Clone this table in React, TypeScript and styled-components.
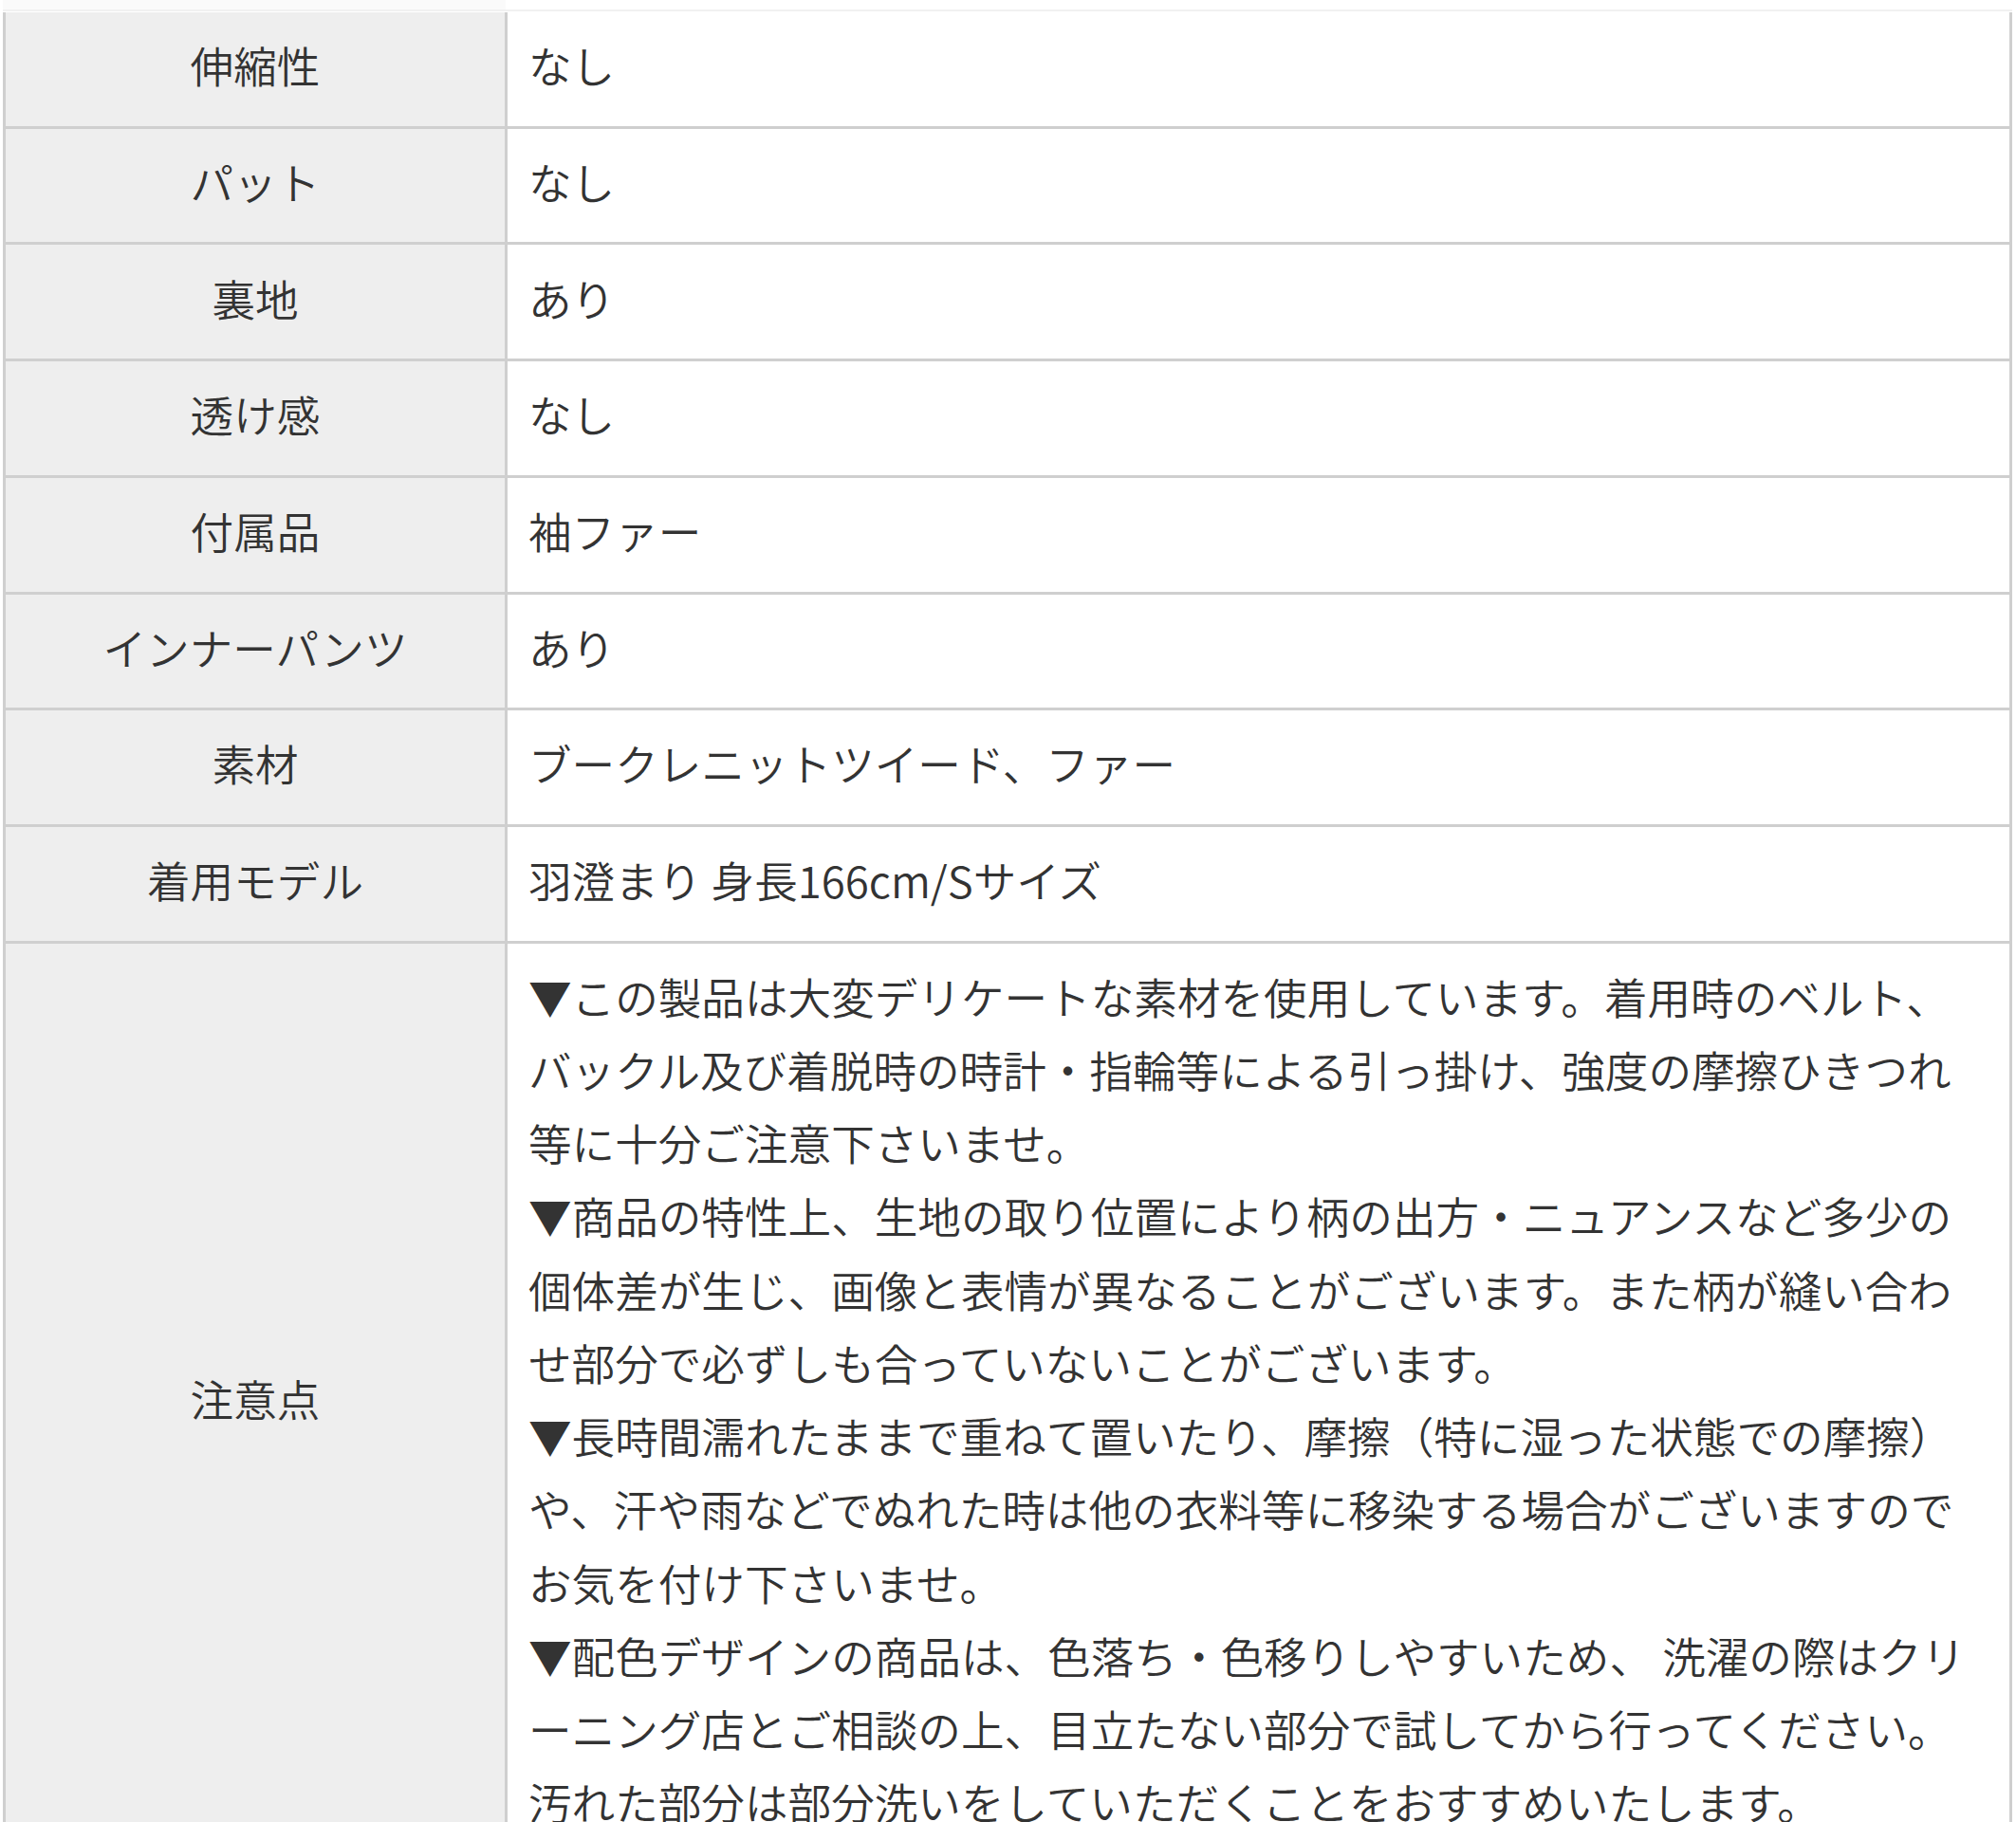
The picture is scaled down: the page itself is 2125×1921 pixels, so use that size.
import styled, { createGlobalStyle } from "styled-components";
import { Fragment } from "react";

const GlobalStyle = createGlobalStyle`
  html, body {
    margin: 0;
    padding: 0;
    background: #fff;
  }
  body {
    font-family: "Noto Sans CJK JP", "Noto Sans", sans-serif;
    color: #333;
  }
`;

const specs: [string, string][] = [
    ["伸縮性", "なし"],
    ["パット", "なし"],
    ["裏地", "あり"],
    ["透け感", "なし"],
    ["付属品", "袖ファー"],
    ["インナーパンツ", "あり"],
    ["素材", "ブークレニットツイード、ファー"],
    ["着用モデル", "羽澄まり 身長166cm/Sサイズ"],
];

// line breaks follow the reference
const notes: string[][] = [
    [
        "▼この製品は大変デリケートな素材を使用しています。着用時のベルト、",
        "バックル及び着脱時の時計・指輪等による引っ掛け、強度の摩擦ひきつれ",
        "等に十分ご注意下さいませ。",
    ],
    [
        "▼商品の特性上、生地の取り位置により柄の出方・ニュアンスなど多少の",
        "個体差が生じ、画像と表情が異なることがございます。また柄が縫い合わ",
        "せ部分で必ずしも合っていないことがございます。",
    ],
    [
        "▼長時間濡れたままで重ねて置いたり、摩擦（特に湿った状態での摩擦）",
        "や、汗や雨などでぬれた時は他の衣料等に移染する場合がございますので",
        "お気を付け下さいませ。",
    ],
    [
        "▼配色デザインの商品は、色落ち・色移りしやすいため、 洗濯の際はクリ",
        "ーニング店とご相談の上、目立たない部分で試してから行ってください。",
        "汚れた部分は部分洗いをしていただくことをおすすめいたします。",
    ],
];

export default function App() {
    const noteLines = notes.flat();
    return (
        <>
            <GlobalStyle/>
            <Page>
                <TopEdge>
                    <div/>
                    <div/>
                </TopEdge>
                <SpecTable>
                    <colgroup>
                        <LabelCol/>
                        <col/>
                    </colgroup>
                    <tbody>
                    {specs.map(([label, value]) => (
                        <tr key={label}>
                            <Label>{label}</Label>
                            <Value>{value}</Value>
                        </tr>
                    ))}
                    <tr>
                        <Label>注意点</Label>
                        <Value>
                            {noteLines.map((line, i) => (
                                <Fragment key={i}>
                                    {line}
                                    {i < noteLines.length - 1 && <br/>}
                                </Fragment>
                            ))}
                        </Value>
                    </tr>
                    </tbody>
                </SpecTable>
            </Page>
        </>
    );
}

const Page = styled.div`
    width: 2125px;
    padding-left: 3px;
    box-sizing: border-box;
`;

const TopEdge = styled.div`
    display: grid;
    grid-template-columns: 530px 1fr;
    width: 2118px;
    height: 10px;
    border-bottom: 2px solid #f1f1f1;
    margin-bottom: 1px;

    div:first-child {
        background: #fafafa;
    }
`;

const SpecTable = styled.table`
    box-sizing: border-box;
    width: 2118px;
    table-layout: fixed;
    border-collapse: separate;
    border-spacing: 0;
    border-left: 3px solid #cfcfcf;
    border-right: 3px solid #cfcfcf;
    font-size: 45.6px;
    font-weight: 350;
    line-height: 77.2px;
`;

const LabelCol = styled.col`
    width: 529px;
`;

const Label = styled.th`
    background: #eeeeee;
    font-weight: 350;
    text-align: center;
    vertical-align: middle;
    padding: 17.25px 10px 25.25px;
    border-right: 3px solid #cfcfcf;
    border-bottom: 3px solid #cfcfcf;
    white-space: nowrap;
`;

const Value = styled.td`
    background: #fff;
    text-align: left;
    vertical-align: middle;
    padding: 17.25px 22px 25.25px;
    border-bottom: 3px solid #cfcfcf;
    white-space: nowrap;
`;
